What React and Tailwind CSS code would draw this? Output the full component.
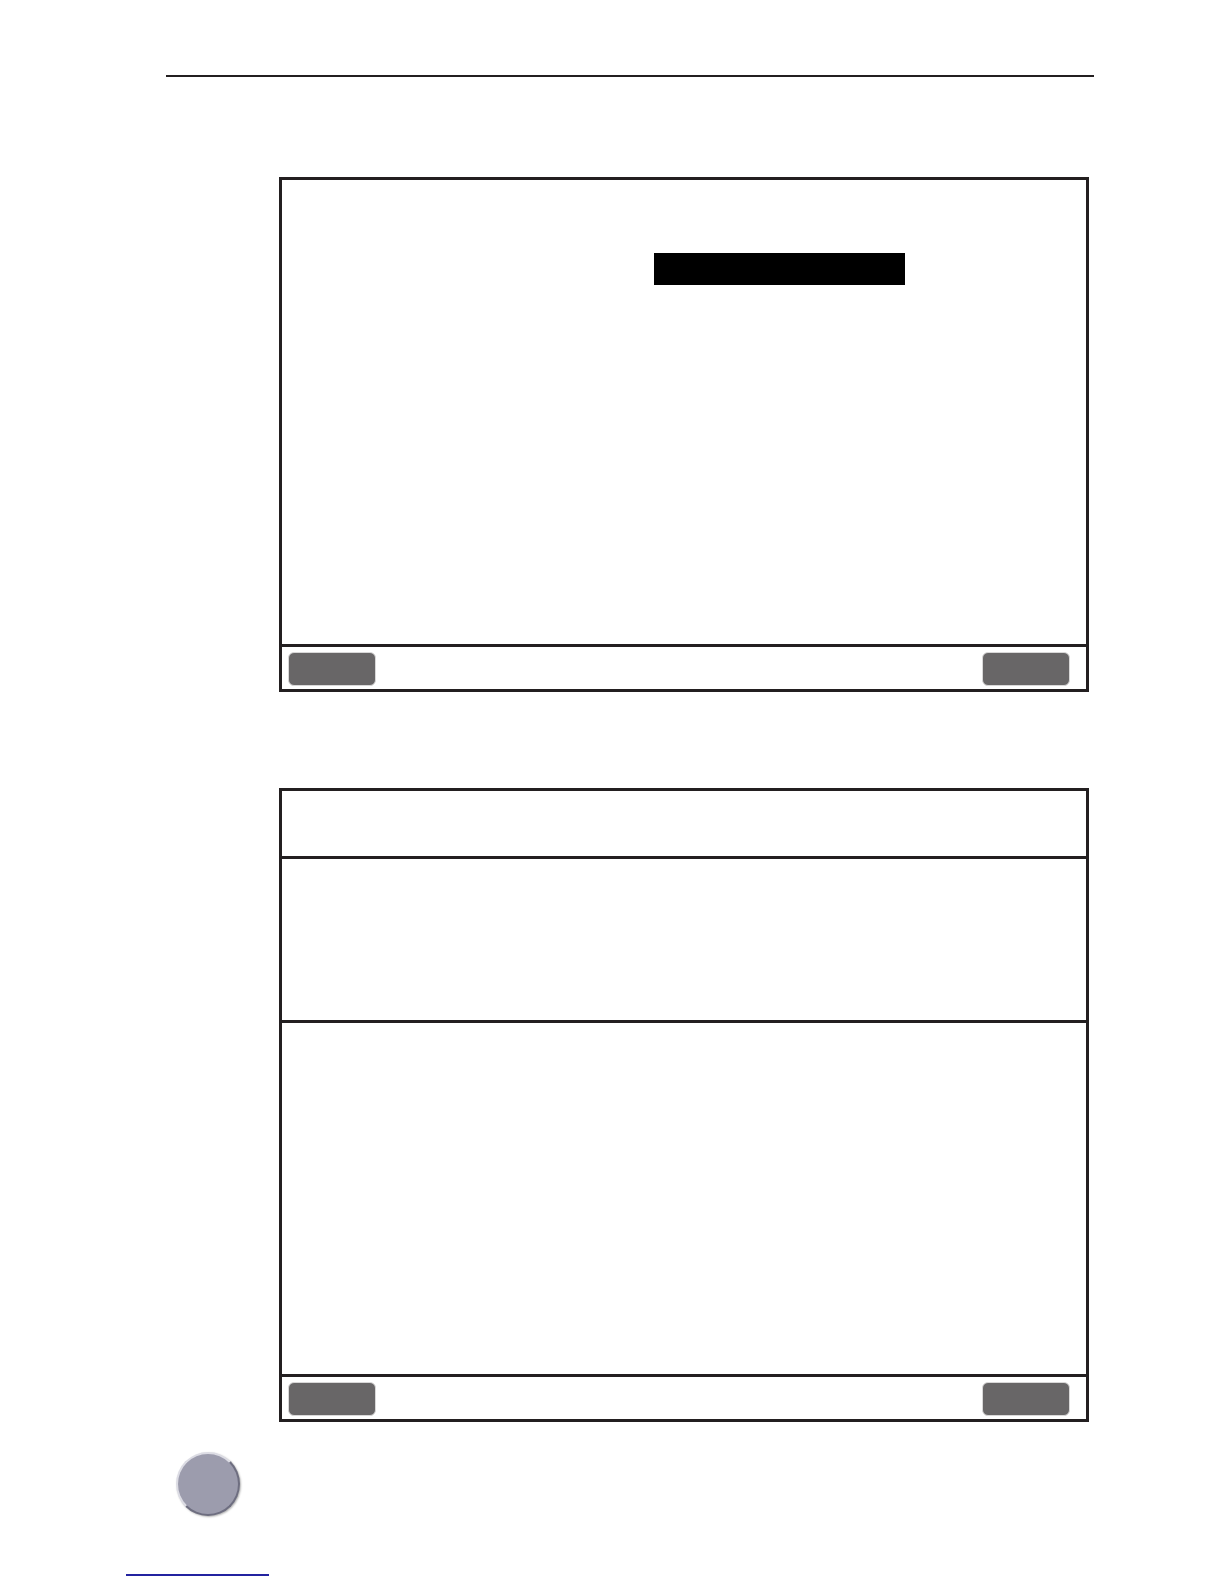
import React from "react";

const Btn = () => (
  <div className="w-[88px] h-[34px] rounded-[6px] bg-[#686667] border border-[#d9d8d8]"></div>
);

const Footer = ({ rightGap = "mr-[16px]" }) => (
  <div className="h-[42px] flex items-start justify-between pt-[5px] pl-[6px]">
    <Btn />
    <div className={rightGap}>
      <Btn />
    </div>
  </div>
);

const App = () => {
  return (
    <div className="w-[1224px] h-[1584px] bg-white flex flex-col overflow-hidden">
      {/* header rule */}
      <div className="mt-[75px] ml-[166px] w-[928px] h-[2px] bg-[#231f20]"></div>

      {/* screen 1 */}
      <div className="mt-[100px] ml-[279px] w-[810px] h-[515px] border-[3px] border-[#231f20] flex flex-col">
        <div className="flex-1 pt-[73px] pl-[372px]">
          <div className="w-[251px] h-[32px] bg-black"></div>
        </div>
        <div className="h-[3px] bg-[#231f20]"></div>
        <Footer />
      </div>

      {/* screen 2 */}
      <div className="mt-[96px] ml-[279px] w-[810px] h-[634px] border-[3px] border-[#231f20] flex flex-col">
        <div className="h-[65px]"></div>
        <div className="h-[3px] bg-[#231f20]"></div>
        <div className="h-[161px]"></div>
        <div className="h-[3px] bg-[#231f20]"></div>
        <div className="flex-1"></div>
        <div className="h-[3px] bg-[#231f20]"></div>
        <Footer />
      </div>

      {/* page marker */}
      <div className="mt-[30px] ml-[176px] w-[64px] h-[64px] rounded-full bg-[#9c9cad] border-[2px] border-t-[#dcdce4] border-l-[#dcdce4] border-r-[#6e6e80] border-b-[#6e6e80] shadow-[1px_1px_2px_rgba(0,0,0,0.3)]"></div>

      <div className="mt-[58px] ml-[126px] w-[143px] h-[2px] bg-[#2323a0]"></div>
    </div>
  );
};

export default App;
